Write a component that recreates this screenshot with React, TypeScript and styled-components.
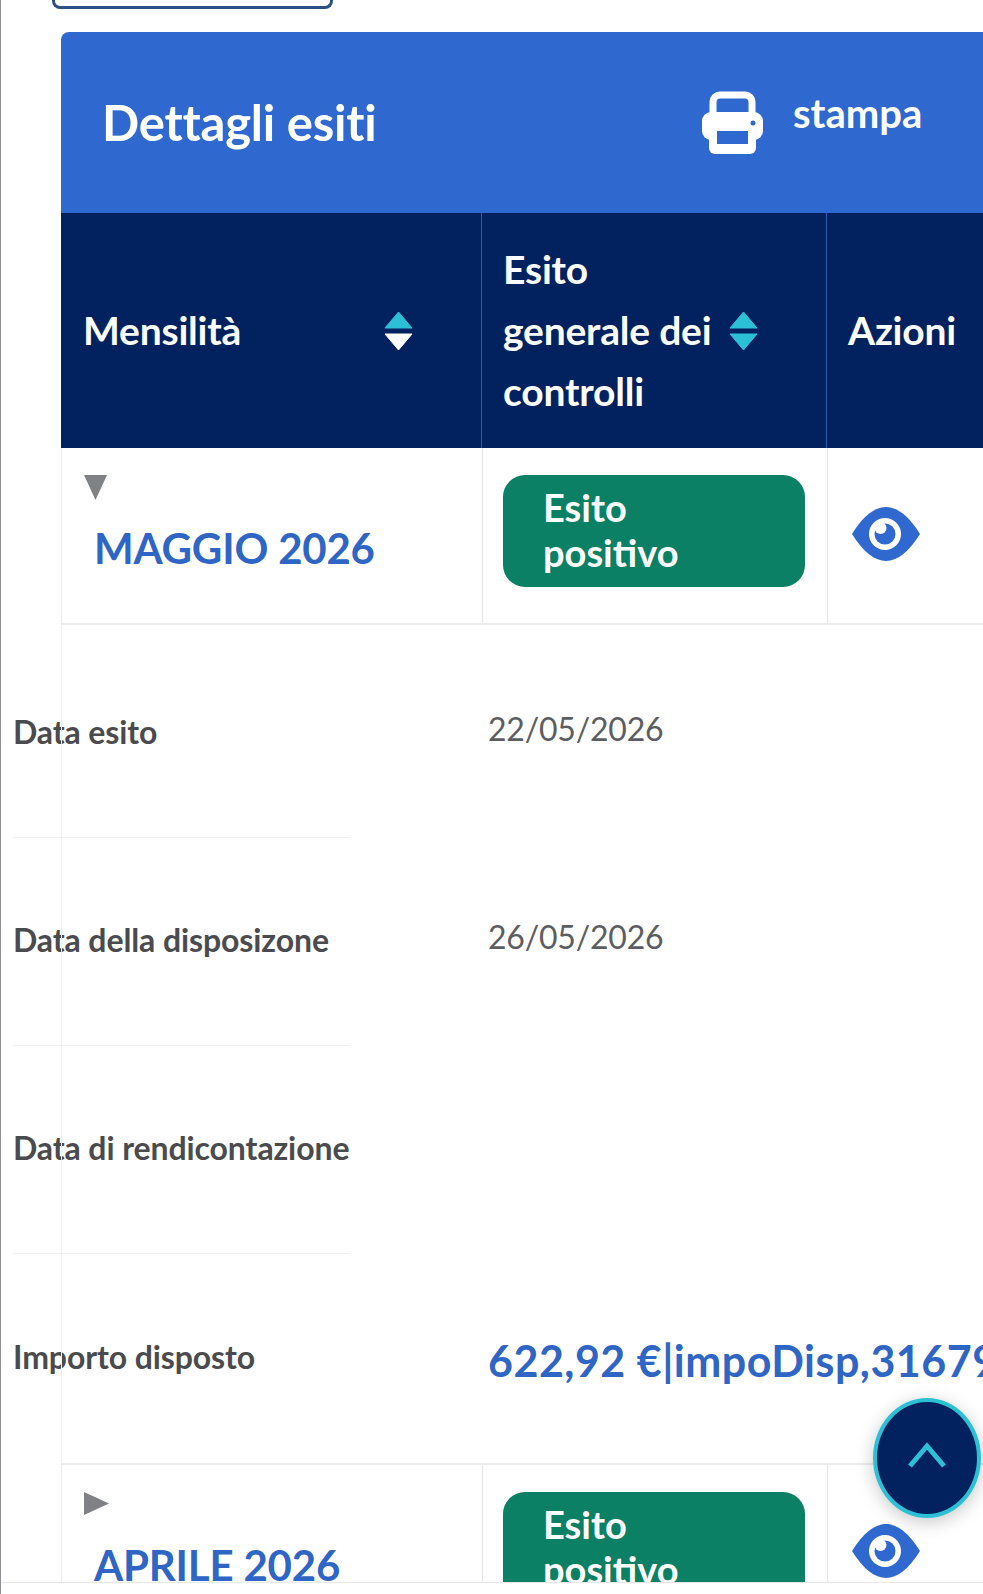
import styled, { createGlobalStyle } from "styled-components";

const BLUE = "#2f69d0";
const NAVY = "#02215f";
const CYAN = "#2cc0d6";

const GlobalStyle = createGlobalStyle`
  html, body {
    margin: 0;
    padding: 0;
    background: #fff;
  }
  * {
    box-sizing: border-box;
  }
`;

const Page = styled.div`
  position: relative;
  width: 983px;
  height: 1594px;
  overflow: hidden;
  background: #fff;
  border-left: 1px solid #8d8f94;
  font-family: "Lato", "Noto Sans", sans-serif;
  display: flex;
  flex-direction: column;
`;

const Viewport = styled.div`
  height: 1582px;
  overflow: hidden;
  flex: none;
`;

const BottomBar = styled.div`
  flex: 1;
  background: #fff;
  border-top: 1px solid #e8e8ea;
`;

const TopButton = styled.div`
  width: 281px;
  height: 9px;
  margin-left: 51px;
  border: 3px solid #2d4f86;
  border-top: none;
  border-radius: 0 0 8px 8px;
`;

const Card = styled.section`
  width: 940px;
  margin: 23px 0 0 60px;
`;

const TitleBar = styled.header`
  height: 181px;
  background: ${BLUE};
  border-radius: 8px 0 0 0;
  color: #fff;
  display: flex;
  align-items: flex-start;
  padding-left: 41px;
`;

const Title = styled.h2`
  width: 600px;
  margin: 60px 0 0;
  font-size: 49px;
  line-height: 60px;
  font-weight: 700;
  letter-spacing: -0.2px;
`;

const PrintIcon = styled.svg`
  width: 62px;
  height: 63px;
  margin-top: 59px;
  flex: none;
`;

const PrintLabel = styled.span`
  margin: 56px 0 0 29px;
  font-size: 40px;
  line-height: 50px;
  font-weight: 700;
`;

const HeadRow = styled.div`
  display: grid;
  grid-template-columns: 421px 345px 1fr;
  height: 235px;
  background: ${NAVY};
  color: #fff;
`;

const HeadCell = styled.div`
  display: flex;
  align-items: center;
  padding-left: 21px;
  font-size: 39px;
  line-height: 61px;
  font-weight: 700;
  letter-spacing: -0.2px;
  border-right: 1px solid #2f5cb0;
  &:first-child {
    padding-left: 22px;
  }
  &:last-child {
    border-right: none;
  }
`;

const HeadText = styled.span<{ $width: number }>`
  width: ${({ $width }) => $width}px;
  flex: none;
`;

const SortIcon = styled.svg`
  width: 29px;
  height: 40px;
  flex: none;
`;

const MonthRow = styled.div<{ $height: number }>`
  display: grid;
  grid-template-columns: 421px 345px 1fr;
  height: ${({ $height }) => $height}px;
  border-bottom: 2px solid #ececee;
  border-left: 1px solid #ececee;
`;

const Cell = styled.div`
  border-right: 1px solid #e6e6e8;
  &:last-child {
    border-right: none;
  }
`;

const MonthCell = styled(Cell)`
  padding: 27px 0 0 22px;
`;

const Caret = styled.svg`
  display: block;
  width: 25px;
  height: 25px;
`;

const MonthTitle = styled.div`
  margin: 23px 0 0 10px;
  font-size: 42px;
  line-height: 50px;
  font-weight: 700;
  color: #2f65c4;
  letter-spacing: -0.2px;
`;

const StatusCell = styled(Cell)`
  padding: 27px 22px 0 20px;
`;

const Pill = styled.div`
  height: 112px;
  padding: 10px 0 0 40px;
  border-radius: 22px;
  background: #0b8064;
  color: #fff;
  font-size: 38px;
  line-height: 45px;
  font-weight: 700;
`;

const ActionCell = styled(Cell)`
  display: flex;
  align-items: center;
  padding: 0 0 3px 24px;
`;

const EyeIcon = styled.svg`
  width: 68px;
  height: 54px;
`;

const Details = styled.div`
  position: relative;
  height: 840px;
  padding-top: 5px;
  border-bottom: 2px solid #ececee;
  &::before {
    content: "";
    position: absolute;
    left: 0;
    top: 0;
    bottom: 0;
    width: 1px;
    background: #eeeef0;
  }
`;

const DetailRow = styled.div`
  display: flex;
  height: 208px;
  margin-left: -48px;
`;

const DetailLabel = styled.div<{ $last?: boolean }>`
  width: 337px;
  flex: none;
  display: flex;
  align-items: center;
  padding-bottom: 4px;
  font-size: 32px;
  font-weight: 700;
  color: #4a4b4e;
  letter-spacing: -0.1px;
  white-space: nowrap;
  border-bottom: ${({ $last }) => ($last ? "none" : "1px solid #f0f0f2")};
`;

const DetailValue = styled.div`
  margin-left: 138px;
  display: flex;
  align-items: center;
  padding-bottom: 12px;
  font-size: 32px;
  font-weight: 400;
  letter-spacing: -0.2px;
  color: #5c5d61;
`;

const AmountValue = styled(DetailValue)`
  padding: 4px 0 0;
  font-size: 43px;
  font-weight: 700;
  color: #2f65c4;
  white-space: nowrap;
  letter-spacing: 0.5px;
`;

const ScrollTop = styled.button`
  position: absolute;
  left: 872px;
  top: 1398px;
  width: 108px;
  height: 120px;
  padding: 0;
  border-radius: 50%;
  border: 4px solid ${CYAN};
  background: ${NAVY};
  box-shadow: 0 4px 18px rgba(0, 0, 0, 0.22);
  display: flex;
  align-items: center;
  justify-content: center;
`;

const ChevronIcon = styled.svg`
  width: 40px;
  height: 28px;
  margin-bottom: 6px;
`;

const Printer = () => (
  <PrintIcon viewBox="0 0 62 63">
    <rect x="11" y="4" width="39" height="30" rx="7" fill="none" stroke="#fff" strokeWidth="7" />
    <rect x="0" y="21" width="61" height="28" rx="9" fill="#fff" />
    <rect x="7" y="38" width="47" height="25" rx="6" fill="#fff" />
    <rect x="15" y="40" width="31" height="13" fill={BLUE} />
    <circle cx="51" cy="32" r="2.5" fill={BLUE} />
  </PrintIcon>
);

const Sort = ({ up, down }: { up: string; down: string }) => (
  <SortIcon viewBox="0 0 29 40">
    <path d="M14.5 1 L28 17 H1 Z" fill={up} strokeLinejoin="round" stroke={up} />
    <path d="M1 23 H28 L14.5 39 Z" fill={down} strokeLinejoin="round" stroke={down} />
  </SortIcon>
);

const CaretIcon = ({ open }: { open: boolean }) => (
  <Caret viewBox="0 0 25 25">
    <path d={open ? "M0 0 H23 L11.5 25 Z" : "M0 0 L25 11.5 L0 23 Z"} fill="#808184" />
  </Caret>
);

const Eye = () => (
  <EyeIcon viewBox="0 0 68 54">
    <path d="M0 27 C11 9 23 0 34 0 S57 9 68 27 C57 45 45 54 34 54 S11 45 0 27 Z" fill={BLUE} />
    <circle cx="33" cy="27" r="16" fill="#fff" />
    <circle cx="33" cy="27" r="10.5" fill={BLUE} />
    <circle cx="28.5" cy="21" r="6" fill="#fff" />
  </EyeIcon>
);

const MonthSummary = ({ month, open, height }: { month: string; open: boolean; height: number }) => (
  <MonthRow $height={height}>
    <MonthCell>
      <CaretIcon open={open} />
      <MonthTitle>{month}</MonthTitle>
    </MonthCell>
    <StatusCell>
      <Pill>
        Esito
        <br />
        positivo
      </Pill>
    </StatusCell>
    <ActionCell>
      <Eye />
    </ActionCell>
  </MonthRow>
);

export default function App() {
  return (
    <>
      <GlobalStyle />
      <Page>
        <Viewport>
          <TopButton />
          <Card>
            <TitleBar>
              <Title>Dettagli esiti</Title>
              <Printer />
              <PrintLabel>stampa</PrintLabel>
            </TitleBar>
            <HeadRow>
              <HeadCell>
                <HeadText $width={301}>Mensilità</HeadText>
                <Sort up={CYAN} down="#fff" />
              </HeadCell>
              <HeadCell>
                <HeadText $width={226}>
                  Esito
                  <br />
                  generale dei
                  <br />
                  controlli
                </HeadText>
                <Sort up={CYAN} down={CYAN} />
              </HeadCell>
              <HeadCell>Azioni</HeadCell>
            </HeadRow>
            <MonthSummary month="MAGGIO 2026" open height={177} />
            <Details>
              <DetailRow>
                <DetailLabel>Data esito</DetailLabel>
                <DetailValue>22/05/2026</DetailValue>
              </DetailRow>
              <DetailRow>
                <DetailLabel>Data della disposizone</DetailLabel>
                <DetailValue>26/05/2026</DetailValue>
              </DetailRow>
              <DetailRow>
                <DetailLabel>Data di rendicontazione</DetailLabel>
                <DetailValue />
              </DetailRow>
              <DetailRow>
                <DetailLabel $last>Importo disposto</DetailLabel>
                <AmountValue>622,92 €|impoDisp,31679</AmountValue>
              </DetailRow>
            </Details>
            <MonthSummary month="APRILE 2026" open={false} height={177} />
          </Card>
        </Viewport>
        <BottomBar />
        <ScrollTop aria-label="Torna su">
          <ChevronIcon viewBox="0 0 40 28">
            <path d="M3 25 L20 5 L37 25" fill="none" stroke={CYAN} strokeWidth="5" />
          </ChevronIcon>
        </ScrollTop>
      </Page>
    </>
  );
}
